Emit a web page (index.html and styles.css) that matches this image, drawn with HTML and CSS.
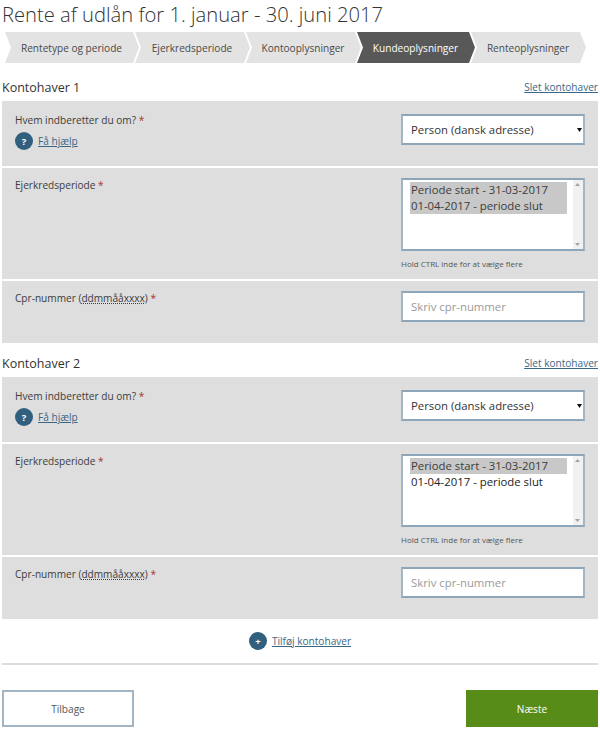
FILE: index.html
```html
<!DOCTYPE html>
<html lang="da">
<head>
    <meta charset="utf-8" />
    <title>Rente af udlån</title>
    <link rel="stylesheet" href="styles.css">
</head>
<body>
    <h1>Rente af udlån for 1. januar - 30. juni 2017</h1>

    <ol class="steps">
        <li class="step step-first">Rentetype og periode</li>
        <li class="step">Ejerkredsperiode</li>
        <li class="step">Kontooplysninger</li>
        <li class="step step-active">Kundeoplysninger</li>
        <li class="step">Renteoplysninger</li>
    </ol>

    <section class="holder">
        <div class="holder-head">
            <h2>Kontohaver 1</h2>
            <a class="link" href="#">Slet kontohaver</a>
        </div>
        <div class="row row-who">
            <div class="row-label">
                <label>Hvem indberetter du om? <span class="req">*</span></label>
                <div class="help"><span class="round">?</span><a class="link" href="#">Få hjælp</a></div>
            </div>
            <select class="field dropdown">
                <option>Person (dansk adresse)</option>
            </select>
        </div>
        <div class="row row-period">
            <div class="row-label">
                <label>Ejerkredsperiode <span class="req">*</span></label>
            </div>
            <div class="field-wrap">
                <select class="field listbox" multiple size="4">
                    <option selected>Periode start - 31-03-2017</option>
                    <option selected>01-04-2017 - periode slut</option>
                </select>
                <p class="hint">Hold CTRL inde for at vælge flere</p>
            </div>
        </div>
        <div class="row row-cpr">
            <div class="row-label">
                <label>Cpr-nummer (<abbr>ddmmååxxxx</abbr>) <span class="req">*</span></label>
            </div>
            <input class="field text" type="text" placeholder="Skriv cpr-nummer">
        </div>
    </section>

    <section class="holder">
        <div class="holder-head">
            <h2>Kontohaver 2</h2>
            <a class="link" href="#">Slet kontohaver</a>
        </div>
        <div class="row row-who">
            <div class="row-label">
                <label>Hvem indberetter du om? <span class="req">*</span></label>
                <div class="help"><span class="round">?</span><a class="link" href="#">Få hjælp</a></div>
            </div>
            <select class="field dropdown">
                <option>Person (dansk adresse)</option>
            </select>
        </div>
        <div class="row row-period">
            <div class="row-label">
                <label>Ejerkredsperiode <span class="req">*</span></label>
            </div>
            <div class="field-wrap">
                <select class="field listbox" multiple size="4">
                    <option selected>Periode start - 31-03-2017</option>
                    <option>01-04-2017 - periode slut</option>
                </select>
                <p class="hint">Hold CTRL inde for at vælge flere</p>
            </div>
        </div>
        <div class="row row-cpr">
            <div class="row-label">
                <label>Cpr-nummer (<abbr>ddmmååxxxx</abbr>) <span class="req">*</span></label>
            </div>
            <input class="field text" type="text" placeholder="Skriv cpr-nummer">
        </div>
    </section>

    <div class="add">
        <span class="round round-plus">+</span><a class="link" href="#">Tilføj kontohaver</a>
    </div>

    <div class="actions">
        <button class="button button-back">Tilbage</button>
        <button class="button button-next">Næste</button>
    </div>
</body>
</html>
```

FILE: styles.css
```css
* {
    box-sizing: border-box;
}

body {
    margin: 0;
    padding: 0 2px;
    font-family: "Open Sans", sans-serif;
    font-size: 10.1px;
    color: #3c3c3c;
    background: #fff;
}

h1 {
    margin: 0;
    height: 32px;
    font-size: 20.2px;
    line-height: 28px;
    font-weight: 300;
    color: #333;
}

.steps {
    display: flex;
    margin: 0 0 0 3px;
    padding: 0;
    height: 31px;
    list-style: none;
}

.step {
    display: flex;
    align-items: center;
    justify-content: center;
    width: 115px;
    margin-right: -4px;
    padding-right: 1px;
    font-size: 10.1px;
    color: #4a4a4a;
    background: #e3e3e3;
    clip-path: polygon(0 0, calc(100% - 6px) 0, 100% 50%, calc(100% - 6px) 100%, 0 100%, 6px 50%);
}

.step-first {
    width: 134px;
}

.step-active {
    width: 118px;
    color: #fff;
    background: #585858;
}

.holder-head {
    display: flex;
    justify-content: space-between;
    align-items: center;
    height: 38px;
    padding-top: 10px;
}

.holder + .holder .holder-head {
    height: 34px;
    padding-top: 6px;
}

h2 {
    margin: 0;
    font-size: 12.5px;
    font-weight: 400;
    color: #333;
}

.link {
    color: #3a6787;
    text-decoration: underline;
    font-size: 10.1px;
}

.row {
    display: flex;
    justify-content: space-between;
    margin-bottom: 2px;
    padding: 12px 13px 0;
    background: #dedede;
}

.row-who {
    height: 65px;
}

.row-period {
    height: 111px;
    padding-top: 10px;
}

.row-cpr {
    height: 62px;
    margin-bottom: 0;
    padding-top: 10px;
}

.row-label label {
    display: block;
    font-size: 10.1px;
    color: #3c3c3c;
}

.req {
    color: #a83232;
}

abbr {
    text-decoration: underline dotted;
}

.help {
    display: flex;
    align-items: center;
    gap: 5px;
    margin-top: 5px;
}

.round {
    display: flex;
    align-items: center;
    justify-content: center;
    width: 18px;
    height: 18px;
    border-radius: 50%;
    background: #31607f;
    color: #fff;
    font-size: 9.5px;
    font-weight: 700;
}

.field {
    display: block;
    width: 184px;
    height: 31px;
    padding: 0 0 0 8px;
    border: 2px solid #a2b6c6;
    border-top-color: #8ea6b9;
    border-bottom-color: #8ea6b9;
    border-radius: 0;
    background: #fff;
    font-family: "Open Sans", sans-serif;
    font-size: 11.35px;
    color: #333;
}

.dropdown {
    margin-top: 1px;
    appearance: none;
    background: #fff url("data:image/svg+xml,%3Csvg xmlns='http://www.w3.org/2000/svg' width='5' height='4'%3E%3Cpath d='M0 0h5L2.5 4z' fill='%23111'/%3E%3C/svg%3E") no-repeat 174px 12px;
}

.field-wrap {
    position: relative;
}

/* scrollbar track drawn over the list, it has no overflow of its own */
.field-wrap::after {
    content: "";
    position: absolute;
    top: 2px;
    right: 2px;
    width: 10px;
    height: 69px;
    background:
        url("data:image/svg+xml,%3Csvg xmlns='http://www.w3.org/2000/svg' width='5' height='3'%3E%3Cpath d='M0 3h5L2.5 0z' fill='%23a3a3a3'/%3E%3C/svg%3E") no-repeat 2px 3px,
        url("data:image/svg+xml,%3Csvg xmlns='http://www.w3.org/2000/svg' width='5' height='3'%3E%3Cpath d='M0 0h5L2.5 3z' fill='%23a3a3a3'/%3E%3C/svg%3E") no-repeat 2px 63px,
        #f1f1f1;
}

.listbox {
    height: 73px;
    padding: 2px 16px 0 7px;
    color: #222;
}

.listbox option {
    height: 16px;
    min-height: 16px;
    padding: 0 1px;
    line-height: 16px;
}

.listbox option:checked {
    background: linear-gradient(#c8c8c8, #c8c8c8);
    color: #3c3c3c;
}

.hint {
    margin: 7px 0 0;
    font-size: 8px;
    color: #555;
}

.text::placeholder {
    color: #9a9a9a;
}

.add {
    display: flex;
    align-items: center;
    justify-content: center;
    gap: 5px;
    height: 46px;
    border-bottom: 2px solid #dcdcdc;
}

.actions {
    display: flex;
    justify-content: space-between;
    margin-top: 25px;
}

.button {
    width: 132px;
    height: 37px;
    font-family: "Open Sans", sans-serif;
    font-size: 10.1px;
    cursor: pointer;
}

.button-back {
    border: 2px solid #a2b6c6;
    background: #fff;
    color: #555;
}

.button-next {
    border: 0;
    background: #568c17;
    color: #fff;
}
```
